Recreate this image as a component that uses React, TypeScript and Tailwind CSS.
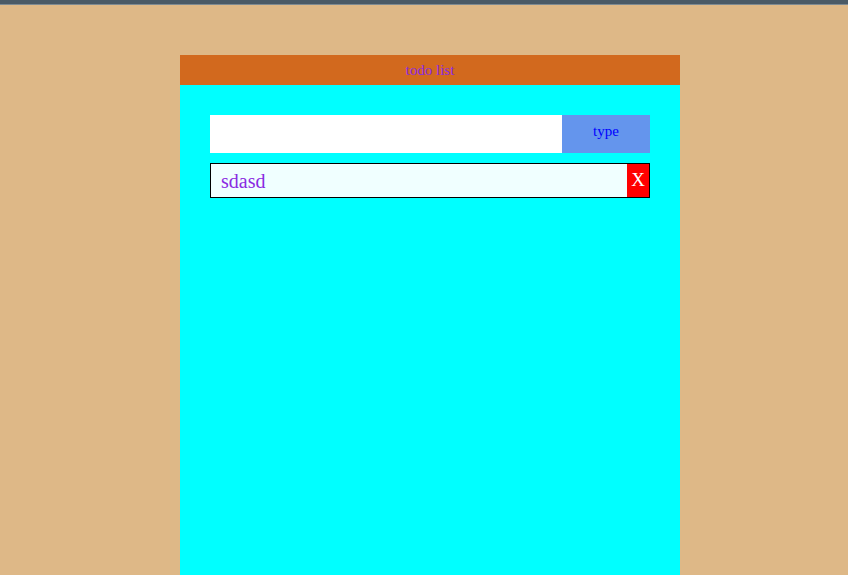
export default function App() {
  return (
    <div className="min-h-screen bg-[#deb887] font-['Liberation_Serif',serif]">
      {/* top strip */}
      <div className="h-[4px] bg-[#4a5a66]" />
      <div className="h-[1px] bg-[#7d8a92]" />

      <div className="ml-[180px] mt-[50px] w-[500px]">
        <div className="h-[30px] bg-[#d2691e] flex items-center justify-center text-[15px] text-[#8a2be2]">
          todo list
        </div>

        <div className="bg-[#00ffff] h-[490px] p-[30px]">
          <div className="flex h-[38px]">
            <input className="flex-1 min-w-0 bg-white outline-none px-2 text-[15px]" />
            <button className="w-[88px] bg-[#6495ed] text-[#0000ff] text-[15px] pb-[6px]">
              type
            </button>
          </div>

          <div className="mt-[10px] flex h-[35px] border border-black bg-[#f0ffff]">
            <span className="flex-1 flex items-center pl-[10px] text-[20px] text-[#8a2be2] font-['Liberation_Serif',serif]">
              sdasd
            </span>
            <button className="w-[22px] bg-[#ff0000] text-white text-[19px] flex items-center justify-center">
              X
            </button>
          </div>
        </div>
      </div>
    </div>
  );
}
